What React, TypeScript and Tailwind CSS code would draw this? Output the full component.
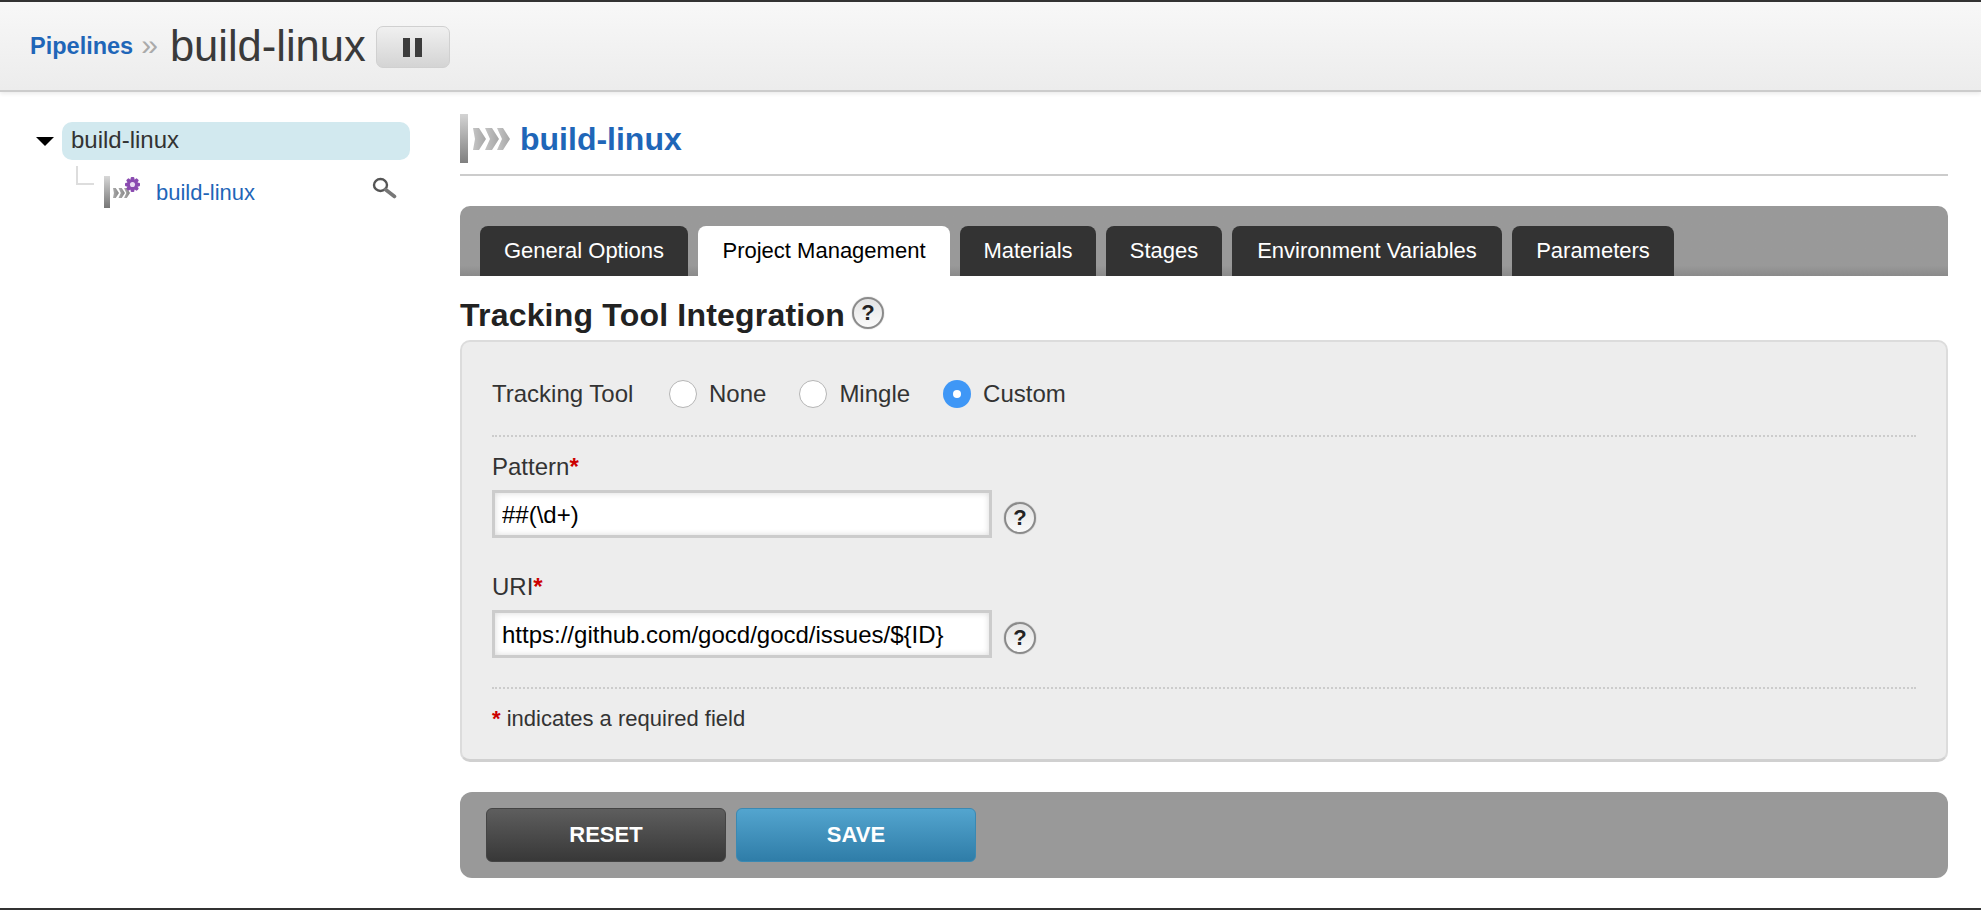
const font = { fontFamily: '"Liberation Sans", Arial, sans-serif' };

const tabs = ["General Options", "Project Management", "Materials", "Stages", "Environment Variables", "Parameters"];
const tabWidths = ["w-[208px]", "w-[252px]", "w-[136px]", "w-[116px]", "w-[270px]", "w-[162px]"];

const Chevrons = ({ className, id, from, to }: { className: string; id: string; from: string; to: string }) => (
  <svg viewBox="0 0 37 26" className={className}>
    <defs>
      <linearGradient id={id} x1="0" x2="1" y1="0" y2="0">
        <stop offset="0" stopColor={from} />
        <stop offset="1" stopColor={to} />
      </linearGradient>
    </defs>
    <path d="M0 2h6l7 11-7 11H0l2-11z" fill={`url(#${id})`} />
    <path d="M12 2h7l7 11-7 11h-7l5-11z" fill={`url(#${id})`} />
    <path d="M24 2h6l7 11-7 11h-6l5-11z" fill={`url(#${id})`} />
  </svg>
);

const Gear = () => (
  <svg viewBox="0 0 20 20" className="absolute left-[21px] top-[1px] w-[15px] h-[15px]">
    <g fill="#8a4bb0">
      <rect x="7.5" y="0" width="5" height="20" rx="1.5" />
      <rect x="7.5" y="0" width="5" height="20" rx="1.5" transform="rotate(45 10 10)" />
      <rect x="7.5" y="0" width="5" height="20" rx="1.5" transform="rotate(90 10 10)" />
      <rect x="7.5" y="0" width="5" height="20" rx="1.5" transform="rotate(135 10 10)" />
      <circle cx="10" cy="10" r="7.5" />
    </g>
    <circle cx="10" cy="10" r="3.4" fill="#e9dcf2" />
  </svg>
);

const Magnifier = () => (
  <svg viewBox="0 0 25 22" className="w-[25px] h-[22px]">
    <ellipse cx="8.5" cy="8" rx="6.5" ry="6" fill="none" stroke="#555" strokeWidth="2.4" />
    <path d="M13.5 12.5l9 7" stroke="#777" strokeWidth="3.6" strokeLinecap="round" />
  </svg>
);

const Help = ({ className }: { className: string }) => (
  <span
    className={`${className} w-[32px] h-[32px] shrink-0 inline-flex items-center justify-center rounded-full border-2 border-[#8a8a8a] bg-gradient-to-b from-[#e4e4e4] to-[#fafafa] font-bold text-[#222] text-[22px] leading-none shadow-[0_0_1px_rgba(0,0,0,0.5)]`}
  >
    ?
  </span>
);

const Radio = ({ label, checked }: { label: string; checked?: boolean }) => (
  <label className="flex items-center gap-[12px]">
    {checked ? (
      <span className="w-[28px] h-[28px] rounded-full bg-[#3f97f6] flex items-center justify-center">
        <span className="w-[8px] h-[8px] rounded-full bg-white" />
      </span>
    ) : (
      <span className="w-[28px] h-[28px] rounded-full bg-white border border-[#b5b5b5]" />
    )}
    <span>{label}</span>
  </label>
);

const Field = ({ label, value }: { label: string; value: string }) => (
  <div>
    <div className="h-[28px] mb-[9px] leading-[28px] text-[24px] text-[#333]">
      {label}
      <span className="text-[#c00] font-bold">*</span>
    </div>
    <div className="flex items-center gap-[12px]">
      <input
        readOnly
        value={value}
        className="w-[500px] h-[48px] px-[7px] pt-[1px] border-[3px] border-[#ccc] bg-white text-[24px] text-black shadow-[inset_0_0_6px_rgba(0,0,0,0.15)] outline-none"
        style={font}
      />
      <Help className="mt-[8px]" />
    </div>
  </div>
);

export default function App() {
  return (
    <div className="h-[910px] flex flex-col bg-white border-b-2 border-[#333] overflow-hidden" style={font}>
      {/* Header */}
      <header className="h-[92px] shrink-0 flex items-center pl-[30px] pt-[2px] border-t-2 border-b-2 border-t-[#333] border-b-[#ccc] bg-gradient-to-b from-[#f8f8f8] to-[#ececec] shadow-[0_2px_4px_rgba(0,0,0,0.08)] relative">
        <a className="text-[23.5px] font-bold text-[#1f66b8]">Pipelines</a>
        <span className="ml-[8px] text-[30px] leading-none text-[#aaa] -mt-[4px]">»</span>
        <h1 className="ml-[12px] text-[43.5px] text-[#3a3a3a] leading-none">build-linux</h1>
        <button className="ml-[10px] w-[74px] h-[42px] rounded-[7px] bg-gradient-to-b from-[#f0f0f0] to-[#d4d4d4] border border-[#d0d0d0] flex items-center justify-center gap-[5px]">
          <span className="w-[7px] h-[19px] bg-[#3c3c3c]" />
          <span className="w-[7px] h-[19px] bg-[#3c3c3c]" />
        </button>
      </header>

      <div className="flex flex-1 min-h-0">
        {/* Tree */}
        <aside className="w-[460px] shrink-0 pt-[30px] pl-[36px]">
          <div className="flex items-center">
            <span className="w-0 h-0 border-l-[9px] border-r-[9px] border-t-[9px] border-l-transparent border-r-transparent border-t-black" />
            <div className="ml-[8px] w-[348px] h-[38px] rounded-[10px] bg-[#d2e9ef] pl-[9px] text-[24px] leading-[36px] text-[#333]">
              build-linux
            </div>
          </div>
          <div className="flex mt-[6px] ml-[40px]">
            <div className="w-[18px] h-[19px] border-l-2 border-b-2 border-[#ddd]" />
            <div className="relative ml-[10px] mt-[10px] w-[6px] h-[32px] bg-gradient-to-b from-[#d8d8d8] to-[#777]">
              <Chevrons id="mini" from="#aaa" to="#888" className="absolute left-[9px] top-[10px] w-[17px] h-[14px]" />
              <Gear />
            </div>
            <a className="ml-[46px] mt-[15px] w-[216px] text-[22px] leading-[24px] text-[#1f66b8]">build-linux</a>
            <div className="mt-[11px]">
              <Magnifier />
            </div>
          </div>
        </aside>

        {/* Main */}
        <main className="flex-1 mr-[33px] pt-[22px] min-w-0">
          <div className="flex items-center pb-[11px] border-b-2 border-[#ccc]">
            <span className="w-[8px] h-[49px] bg-gradient-to-b from-[#d4d4d4] to-[#808080]" />
            <Chevrons id="big" from="#c4c4c4" to="#a6a6a6" className="ml-[5px] w-[37px] h-[26px]" />
            <h2 className="ml-[10px] text-[32px] leading-none font-bold text-[#1f66b8]">build-linux</h2>
          </div>

          <nav className="mt-[30px] h-[70px] pt-[20px] pl-[20px] flex gap-[10px] rounded-t-[10px] bg-gradient-to-b from-[#999] from-85% to-[#8a8a8a]">
            {tabs.map((t, i) => (
              <div
                key={t}
                className={`${tabWidths[i]} h-[50px] pb-[2px] rounded-t-[8px] flex items-center justify-center text-[22px] ${
                  i === 1 ? "bg-white text-black" : "bg-[#333] text-white"
                }`}
              >
                {t}
              </div>
            ))}
          </nav>

          <div className="h-[64px] pt-[14px] flex items-center gap-[7px]">
            <h3 className="text-[32px] tracking-[0.2px] font-bold text-[#222]">Tracking Tool Integration</h3>
            <Help className="-mt-[4px]" />
          </div>

          <section className="h-[422px] rounded-[10px] border-2 border-b-[3px] border-[#dcdcdc] border-b-[#d0d0d0] bg-[#ededed] pt-[38px] px-[30px]">
            <div className="flex items-center h-[28px] text-[24px] text-[#333]">
              <span className="w-[177px] shrink-0">Tracking Tool</span>
              <div className="flex gap-[33px]">
                <Radio label="None" />
                <Radio label="Mingle" />
                <Radio label="Custom" checked />
              </div>
            </div>
            <div className="mt-[27px] mb-[16px] border-t-2 border-dotted border-[#ccc]" />
            <Field label="Pattern" value="##(\d+)" />
            <div className="h-[35px]" />
            <Field label="URI" value="https://github.com/gocd/gocd/issues/${ID}" />
            <div className="mt-[29px] mb-[17px] border-t-2 border-dotted border-[#ccc]" />
            <p className="text-[22px] leading-[26px] text-[#333]">
              <span className="text-[#c00] font-bold">*</span> indicates a required field
            </p>
          </section>

          <div className="mt-[30px] h-[86px] rounded-[12px] bg-[#999] flex items-center pl-[26px] gap-[10px]">
            <button className="w-[240px] h-[54px] pb-[2px] rounded-[6px] bg-gradient-to-b from-[#5e5e5e] to-[#383838] border border-[#444] text-white font-bold text-[22px]">
              RESET
            </button>
            <button className="w-[240px] h-[54px] pb-[2px] rounded-[6px] bg-gradient-to-b from-[#53a5cf] to-[#2f7da8] border border-[#3a89b3] text-white font-bold text-[22px]">
              SAVE
            </button>
          </div>
        </main>
      </div>
    </div>
  );
}
